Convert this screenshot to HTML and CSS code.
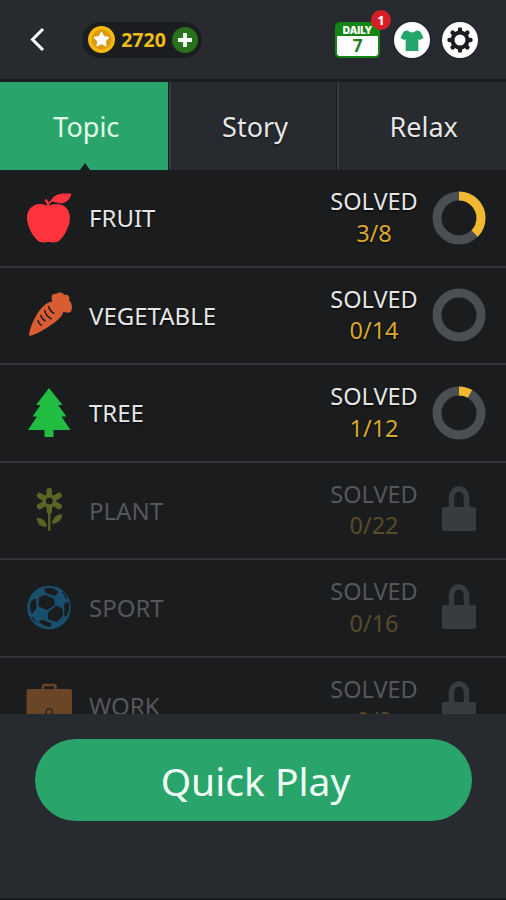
FILE: index.html
```html
<!DOCTYPE html>
<html lang="en">
<head>
    <meta charset="UTF-8">
    <meta name="viewport" content="width=device-width, initial-scale=1.0">
    <title>Topics</title>
    <link rel="stylesheet" href="styles.css">
</head>
<body>
    <!-- shared shapes -->
    <svg class="sprite" width="0" height="0">
        <symbol id="lock" viewBox="0 0 54 54">
            <path d="M19.500 25V14a7.500 8 0 0 1 15 0v11" fill="none" stroke="currentColor" stroke-width="5.5"/>
            <rect x="10" y="24" width="34" height="24" rx="2" fill="currentColor"/>
        </symbol>
    </svg>

    <div class="app">
        <div class="header">
            <svg class="back" width="20" height="28" viewBox="0 0 20 28">
                <path d="M16 3L5.500 13.500 16 24" fill="none" stroke="#fff" stroke-width="3"/>
            </svg>
            <div class="coins">
                <svg width="27" height="27" viewBox="0 0 27 27">
                    <circle cx="13.500" cy="13.500" r="13.500" fill="#f3b90c"/>
                    <circle cx="13.500" cy="13.500" r="10" fill="#dc9a10"/>
                    <path d="M13.500 6.500l2.200 4.300 4.800.7-3.500 3.400.8 4.800-4.300-2.300-4.300 2.300.8-4.800-3.500-3.400 4.800-.7z" fill="#fff" stroke="#fff" stroke-width="1.500" stroke-linejoin="round"/>
                </svg>
                <span class="amount">2720</span>
                <svg width="26" height="26" viewBox="0 0 26 26">
                    <circle cx="13" cy="13" r="13" fill="#28701a"/>
                    <path d="M13 6v14M6 13h14" stroke="#fff" stroke-width="3.800"/>
                </svg>
            </div>
            <div class="daily">
                <div class="daily-title">DAILY</div>
                <div class="daily-day">7</div>
                <div class="badge">1</div>
            </div>
            <div class="round shirt">
                <svg width="36" height="36" viewBox="0 0 36 36">
                    <path d="M13 8.300Q18 12.500 23 8.300L26.500 9.800 29.500 16 25.300 18.300 24.300 16.800V29H11.700V16.800L10.700 18.300 6.500 16 9.500 9.800z" fill="#24a56b"/>
                </svg>
            </div>
            <div class="round gear">
                <svg width="36" height="36" viewBox="0 0 36 36">
                    <circle cx="18" cy="18" r="7.500" fill="none" stroke="#1b1c20" stroke-width="4"/>
                    <g stroke="#1b1c20" stroke-width="4.400" stroke-linecap="round">
                        <path d="M18 7.500V10M18 26v2.500M7.500 18H10M26 18h2.500"/>
                        <path d="M10.600 10.600l1.800 1.800M23.600 23.600l1.800 1.800M25.400 10.600l-1.800 1.800M12.400 23.600l-1.800 1.800"/>
                    </g>
                </svg>
            </div>
        </div>

        <div class="tabs">
            <div class="tab active">Topic</div>
            <div class="tab">Story</div>
            <div class="tab">Relax</div>
        </div>

        <div class="topics">
            <div class="topic">
                <svg class="icon" viewBox="0 0 52 52">
                    <path d="M24 14C20 11.500 15 11.500 11 13.500 5 16.500 3 23 4.500 30 6 38 11 46 16 49.500c3 1.500 6 1 9.500 .3 3.500.7 7 1.200 10-.5C41 45 45 37 46.500 30 48 22 45 15.500 39 13 34.500 11.300 29.500 11.500 25.500 14z" fill="#ff343d"/>
                    <path d="M25.500 14.500Q25 10.500 22.500 7.500" fill="none" stroke="#ff343d" stroke-width="2.500"/>
                    <path d="M28 9C30 3 36 .5 48.500 1.800 47 8.500 41 13 34.500 10.800Q31 10 28 9z" fill="#ff343d"/>
                    <path d="M25.500 12.500Q27 8.500 33 7" fill="none" stroke="#ff343d" stroke-width="1.800"/>
                </svg>
                <div class="name">FRUIT</div>
                <div class="solved">SOLVED<span>3/8</span></div>
                <svg class="status" viewBox="0 0 54 54">
                    <circle class="ring" cx="27" cy="27" r="22" pathLength="8"/>
                    <circle class="ring done" cx="27" cy="27" r="22" pathLength="8" stroke-dasharray="3 5"/>
                </svg>
            </div>
            <div class="topic">
                <svg class="icon" viewBox="0 0 52 52">
                    <path d="M6 45.500C7 38 13 24 20 17.500 23 14.500 26 13 29.500 12.500 27.500 8 29 4 33 5 36 3 39.500 3 41 6 45 5 47.500 8 46 11.500 49.500 14 49.500 19 48 22.500 45 24.500 42 23.500 40.500 22.500 39.500 26.500 37 29 34 31.500 26 38 16 44 8 46.800Q6 47 6 45.500z" fill="#d95c33"/>
                    <path d="M25.500 17q1 5 5.800 7.500M21.500 21q1.500 6.500 7 9M17.500 26q1.500 4.500 5 6M15 31q.5 4 4 5.500" fill="none" stroke="#1c1e20" stroke-width="1.500"/>
                </svg>
                <div class="name">VEGETABLE</div>
                <div class="solved">SOLVED<span>0/14</span></div>
                <svg class="status" viewBox="0 0 54 54">
                    <circle class="ring" cx="27" cy="27" r="22"/>
                </svg>
            </div>
            <div class="topic">
                <svg class="icon" viewBox="0 0 52 52">
                    <path d="M26 1L39.500 18H35L43.500 29.500H38.500L47.500 43H30.500V50H21.500V43H5L14 29.500H9.500L17.500 18H13z" fill="#20bd42"/>
                </svg>
                <div class="name">TREE</div>
                <div class="solved">SOLVED<span>1/12</span></div>
                <svg class="status" viewBox="0 0 54 54">
                    <circle class="ring" cx="27" cy="27" r="22" pathLength="12"/>
                    <circle class="ring done" cx="27" cy="27" r="22" pathLength="12" stroke-dasharray="1 11"/>
                </svg>
            </div>
            <div class="topic locked">
                <svg class="icon" viewBox="0 0 52 52">
                    <g stroke="#5b6425" stroke-width="5.500" stroke-linecap="round">
                        <path d="M26.300 6.500V11M26.300 23V27M16.500 11.500l4 2.300M36.100 11.500l-4 2.300M16.500 22.500l4-2.300M36.100 22.500l-4-2.300"/>
                    </g>
                    <circle cx="26.300" cy="17" r="5.200" fill="none" stroke="#5b6425" stroke-width="3.500"/>
                    <path d="M26.300 27v20" stroke="#5b6425" stroke-width="2.200"/>
                    <path d="M13.500 34Q22 33 24 42.500 15.500 44.500 13.500 34zM39 30Q40 38 29 40 29.500 31 39 30z" fill="#5b6425"/>
                </svg>
                <div class="name">PLANT</div>
                <div class="solved">SOLVED<span>0/22</span></div>
                <svg class="status"><use href="#lock"/></svg>
            </div>
            <div class="topic locked">
                <svg class="icon" viewBox="0 0 52 52">
                    <circle cx="26" cy="25.500" r="21.800" fill="#184f6d"/>
                    <g fill="#1a1c1e" stroke="#1a1c1e" stroke-linejoin="round">
                        <path d="M16.500 15.500l5.500-2 8.500 3.500 1 6-7.500 4.500-8-3.500z"/>
                        <path d="M25.500 30.500l8-6.500 5.500 3 .5 7-6 5.500-8-2.500z"/>
                        <path d="M21.500 7q5-1.500 9 0l4.500 3-3 3.500-8.500-2.500z"/>
                        <path d="M7.500 22q1-4.500 5-5l.5 9-4 5.500q-2-4-1.500-9.500z"/>
                        <path d="M41.500 22l4-1.500q1.500 8-3 14l-1-2 .5-5.500z"/>
                        <path d="M16 39.500l4-1 8 3-.5 3q-6 0-11.500-5z"/>
                        <path d="M39.500 10q3.500 3 4.500 7l-2-3z"/>
                        <path d="M9 35q-1-1 3.500 4.500z"/>
                    </g>
                </svg>
                <div class="name">SPORT</div>
                <div class="solved">SOLVED<span>0/16</span></div>
                <svg class="status"><use href="#lock"/></svg>
            </div>
            <div class="topic locked">
                <svg class="icon" viewBox="0 0 52 52">
                    <path d="M20 11V8q0-2 2-2h8.500q2 0 2 2V11" fill="none" stroke="#6b4626" stroke-width="2.600"/>
                    <rect x="3.500" y="10" width="45.500" height="36" rx="2" fill="#6b4626"/>
                    <path d="M23 36v-4a3.500 3.500 0 0 1 6.500 0v4" fill="none" stroke="#2c241d" stroke-width="1.600"/>
                </svg>
                <div class="name">WORK</div>
                <div class="solved">SOLVED<span>0/8</span></div>
                <svg class="status"><use href="#lock"/></svg>
            </div>
        </div>

        <div class="footer">
            <button class="play">Quick Play</button>
        </div>
    </div>
</body>
</html>
```
FILE: styles.css
```css
body {
    font-family: "Noto Sans", sans-serif;
    margin: 0;
    padding: 0;
    background-color: #272a2e;
    color: #e6e6e6;
}

.sprite {
    display: block;
}

.app {
    display: flex;
    flex-direction: column;
    width: 506px;
    height: 900px;
    overflow: hidden;
    box-sizing: border-box;
    border-bottom: 2px solid #1d1720;
}

.header {
    display: flex;
    align-items: center;
    flex: none;
    height: 82px;
    box-sizing: border-box;
    padding: 0 28px 0 27px;
    border-bottom: 3px solid #1a1c1f;
}

.coins {
    display: flex;
    align-items: center;
    box-sizing: border-box;
    width: 120px;
    height: 36px;
    margin-left: 35px;
    padding: 0 4px 0 6px;
    border-radius: 18px;
    background-color: #1b1d20;
}

.coins .amount {
    flex: 1;
    text-align: center;
    font-size: 19.5px;
    font-weight: bold;
    color: #efbd17;
}

.daily {
    position: relative;
    box-sizing: border-box;
    width: 45px;
    height: 36px;
    margin-left: auto;
    padding: 2px;
    border-radius: 5px;
    background-color: #138513;
    text-align: center;
}

.daily-title {
    height: 12px;
    font-family: "Inter", sans-serif;
    font-size: 10px;
    font-weight: 900;
    line-height: 12px;
    color: #fff;
}

.daily-day {
    height: 20px;
    border-radius: 1px 1px 3px 3px;
    background-color: #fff;
    font-size: 17px;
    font-weight: bold;
    line-height: 19px;
    color: #1d7d22;
}

.badge {
    position: absolute;
    top: -12px;
    right: -11px;
    width: 20px;
    height: 20px;
    border-radius: 50%;
    background-color: #d5202a;
    font-size: 13px;
    line-height: 20px;
    font-weight: bold;
    color: #fff;
}

.round {
    width: 36px;
    height: 36px;
    border-radius: 50%;
    background-color: #fff;
    box-shadow: 0 0 2px #111;
}

.round svg {
    display: block;
}

.shirt {
    margin-left: 14px;
}

.gear {
    margin-left: 12px;
}

.tabs {
    display: flex;
    flex: none;
    height: 88px;
}

.tab {
    position: relative;
    flex: 1;
    box-sizing: border-box;
    padding-left: 2px;
    border-left: 2px solid #383c40;
    box-shadow: -1px 0 #1a1c1f;
    text-align: center;
    font-size: 27px;
    line-height: 89px;
    text-shadow: 0 1px 2px #111;
}

.tab.active {
    padding-left: 4px;
    border-left: none;
    background-color: #29a56b;
    color: #e2fbe9;
    text-shadow: none;
}

.tab.active::after {
    content: '';
    position: absolute;
    bottom: 0;
    left: 80px;
    border-left: 5px solid transparent;
    border-right: 5px solid transparent;
    border-bottom: 7px solid #1a1c1e;
}

.topics {
    flex: none;
    height: 544px;
    overflow: hidden;
    background-color: #1a1c1e;
}

.topic {
    display: flex;
    align-items: center;
    box-sizing: border-box;
    height: 97.5px;
    padding: 0 20px 0 23px;
    border-bottom: 2px solid #33373b;
    font-size: 23.5px;
    text-shadow: 0 1px 2px #000;
}

.icon {
    width: 52px;
    height: 52px;
}

.name {
    flex: 1;
    margin-left: 14px;
    font-size: 24px;
}

.solved {
    width: 100px;
    margin-right: 8px;
    line-height: 31.5px;
    text-align: center;
}

.solved span {
    display: block;
    color: #dba82e;
}

.status {
    width: 54px;
    height: 54px;
    color: #373c41;
}

.ring {
    fill: none;
    stroke: #4a4f54;
    stroke-width: 9;
    transform: rotate(-90deg);
    transform-origin: 27px 27px;
}

.ring.done {
    stroke: #f0b92f;
}

.locked {
    color: #55575a;
    text-shadow: none;
}

.locked .solved span {
    color: #574c27;
}

.footer {
    flex: 1;
    padding: 25px 34px 0 35px;
}

.play {
    display: block;
    width: 100%;
    height: 82px;
    padding: 0 0 0 4px;
    border: none;
    border-radius: 41px;
    background-color: #29a56b;
    font-family: inherit;
    font-size: 39px;
    color: #f2fff6;
    cursor: pointer;
}
```
